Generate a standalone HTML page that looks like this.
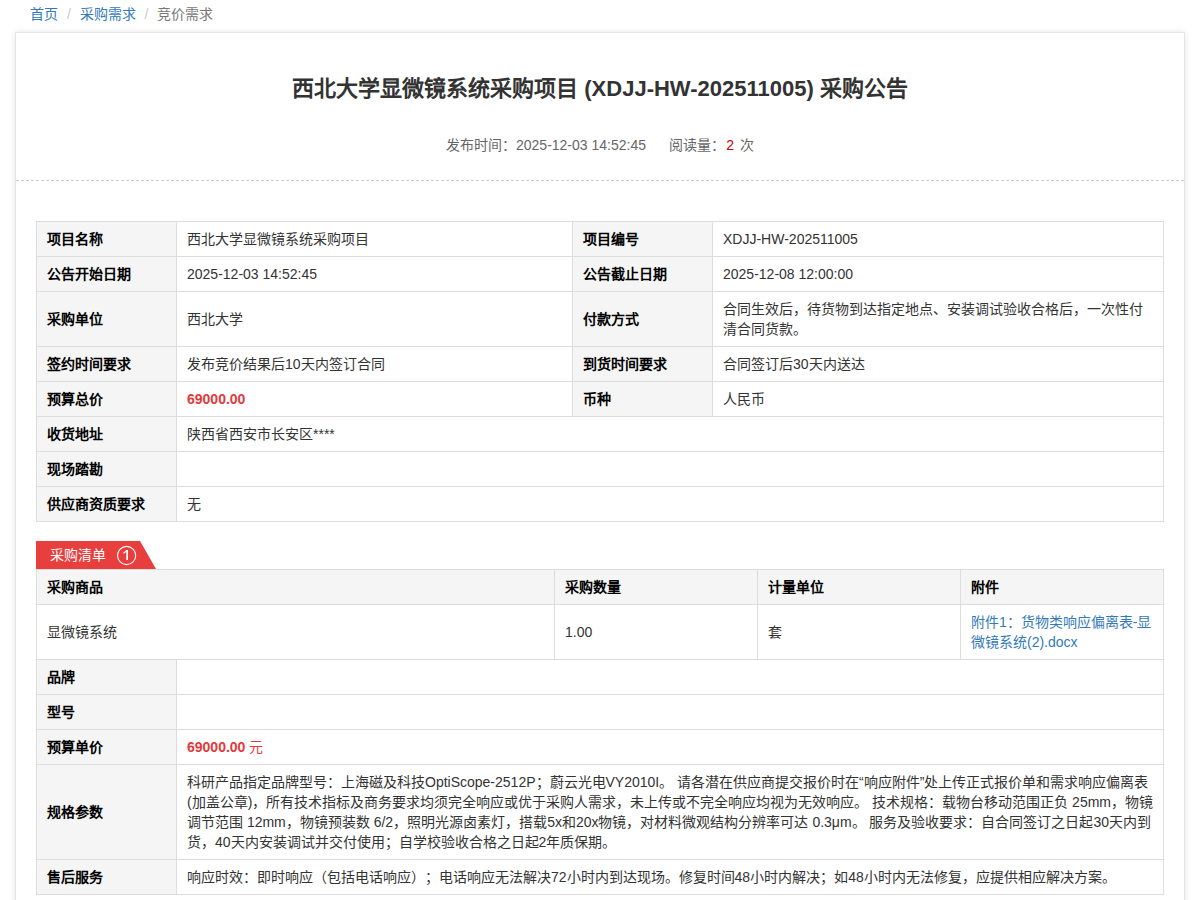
<!DOCTYPE html>
<html lang="zh-CN"><head><meta charset="utf-8">
<style>
*{box-sizing:border-box}
html,body{margin:0;padding:0;background:#fff}
body{text-spacing-trim:space-all;font-family:"Liberation Sans",sans-serif;font-size:14px;line-height:20px;color:#333;width:1195px;height:900px;overflow:hidden;position:relative}
.bc{position:absolute;left:30px;top:4px;height:20px;line-height:20px;white-space:nowrap}
.bc a{color:#337ab7;text-decoration:none}
.bc .sep{color:#ccc;padding:0 5px}
.bc .act{color:#777}
.box{position:absolute;left:15px;top:32px;width:1170px;height:900px;border:1px solid #e6e6e6;box-shadow:0 0 6px rgba(0,0,0,.1);background:#fff}
.hd{height:148px;border-bottom:1px dashed #ccc;text-align:center;position:relative}
.title{position:absolute;left:0;right:0;top:41px;font-size:22px;font-weight:bold;color:#333;line-height:30px}
.meta{position:absolute;left:0;right:0;top:102px;font-size:14px;color:#666;line-height:20px}
.meta .red{color:#c00;margin:0 2px 0 1px}
table{border-collapse:collapse;table-layout:fixed;position:absolute;left:20px}
td,th{border:1px solid #ddd;padding:7px 10px;text-align:left;vertical-align:middle;font-size:14px;line-height:20px}
td.l{background:#f5f5f5;font-weight:bold;color:#000}
td.v{color:#333}
.price{color:#e4393c;font-weight:bold}
.t1{top:188px;width:1127px}
.tab{position:absolute;left:20px;top:508px;height:28px;width:120px}
.tab svg{position:absolute;left:0;top:0}
.tab .txt{position:absolute;left:14px;top:4px;color:#fff;line-height:20px}
.tab .num{position:absolute;left:81px;top:5px;width:19px;height:19px;border:1px solid #fff;border-radius:50%;color:#fff;text-align:center;line-height:17px;font-size:14px}
.t2{top:536px;width:1127px}
.t2 th{background:#f5f5f5;font-weight:bold;color:#000}
.t3{top:626px;width:1127px}
a.att{color:#337ab7;text-decoration:none}
</style></head><body>
<div class="bc"><a>首页</a> <span class="sep">/&nbsp;</span><a>采购需求</a> <span class="sep">/&nbsp;</span><span class="act">竞价需求</span></div>
<div class="box">
  <div class="hd">
    <div class="title">西北大学显微镜系统采购项目 (XDJJ-HW-202511005) 采购公告</div>
    <div class="meta">发布时间：2025-12-03 14:52:45 &nbsp;&nbsp;&nbsp;&nbsp; 阅读量：<span class="red">2</span> 次</div>
  </div>
  <table class="t1">
    <colgroup><col style="width:140px"><col style="width:396px"><col style="width:140px"><col style="width:451px"></colgroup>
    <tr><td class="l">项目名称</td><td class="v">西北大学显微镜系统采购项目</td><td class="l">项目编号</td><td class="v">XDJJ-HW-202511005</td></tr>
    <tr><td class="l">公告开始日期</td><td class="v">2025-12-03 14:52:45</td><td class="l">公告截止日期</td><td class="v">2025-12-08 12:00:00</td></tr>
    <tr><td class="l">采购单位</td><td class="v">西北大学</td><td class="l">付款方式</td><td class="v">合同生效后，待货物到达指定地点、安装调试验收合格后，一次性付清合同货款。</td></tr>
    <tr><td class="l">签约时间要求</td><td class="v">发布竞价结果后10天内签订合同</td><td class="l">到货时间要求</td><td class="v">合同签订后30天内送达</td></tr>
    <tr><td class="l">预算总价</td><td class="v"><span class="price">69000.00</span></td><td class="l">币种</td><td class="v">人民币</td></tr>
    <tr><td class="l">收货地址</td><td class="v" colspan="3">陕西省西安市长安区****</td></tr>
    <tr><td class="l">现场踏勘</td><td class="v" colspan="3"></td></tr>
    <tr><td class="l">供应商资质要求</td><td class="v" colspan="3">无</td></tr>
  </table>
  <div class="tab">
    <svg width="121" height="28"><polygon points="0,0 104,0 120,28 0,28" fill="#e83e3e"/><circle cx="90.6" cy="14.5" r="9.1" fill="none" stroke="#fff" stroke-width="1.1"/><rect x="90.3" y="9.1" width="1.7" height="9.9" fill="#fff"/><path d="M91 9.5 L87.5 12.3" stroke="#fff" stroke-width="1.3" fill="none"/></svg>
    <span class="txt">采购清单</span>
  </div>
  <table class="t2">
    <colgroup><col style="width:518px"><col style="width:203px"><col style="width:203px"><col style="width:203px"></colgroup>
    <tr><th>采购商品</th><th>采购数量</th><th>计量单位</th><th>附件</th></tr>
    <tr><td class="v">显微镜系统</td><td class="v">1.00</td><td class="v">套</td><td class="v"><a class="att">附件1：货物类响应偏离表-显微镜系统(2).docx</a></td></tr>
  </table>
  <table class="t3">
    <colgroup><col style="width:140px"><col style="width:987px"></colgroup>
    <tr><td class="l">品牌</td><td class="v"></td></tr>
    <tr><td class="l">型号</td><td class="v"></td></tr>
    <tr><td class="l">预算单价</td><td class="v"><span class="price">69000.00</span><span class="price" style="font-weight:normal"> 元</span></td></tr>
    <tr><td class="l">规格参数</td><td class="v">科研产品指定品牌型号：上海磁及科技OptiScope-2512P；蔚云光电VY2010I。 请各潜在供应商提交报价时在“响应附件”处上传正式报价单和需求响应偏离表(加盖公章)，所有技术指标及商务要求均须完全响应或优于采购人需求，未上传或不完全响应均视为无效响应。 技术规格：载物台移动范围正负 25mm，物镜调节范围 12mm，物镜预装数 6/2，照明光源卤素灯，搭载5x和20x物镜，对材料微观结构分辨率可达 0.3μm。 服务及验收要求：自合同签订之日起30天内到货，40天内安装调试并交付使用；自学校验收合格之日起2年质保期。</td></tr>
    <tr><td class="l">售后服务</td><td class="v">响应时效：即时响应（包括电话响应）；电话响应无法解决72小时内到达现场。修复时间48小时内解决；如48小时内无法修复，应提供相应解决方案。</td></tr>
  </table>
</div>
</body></html>
